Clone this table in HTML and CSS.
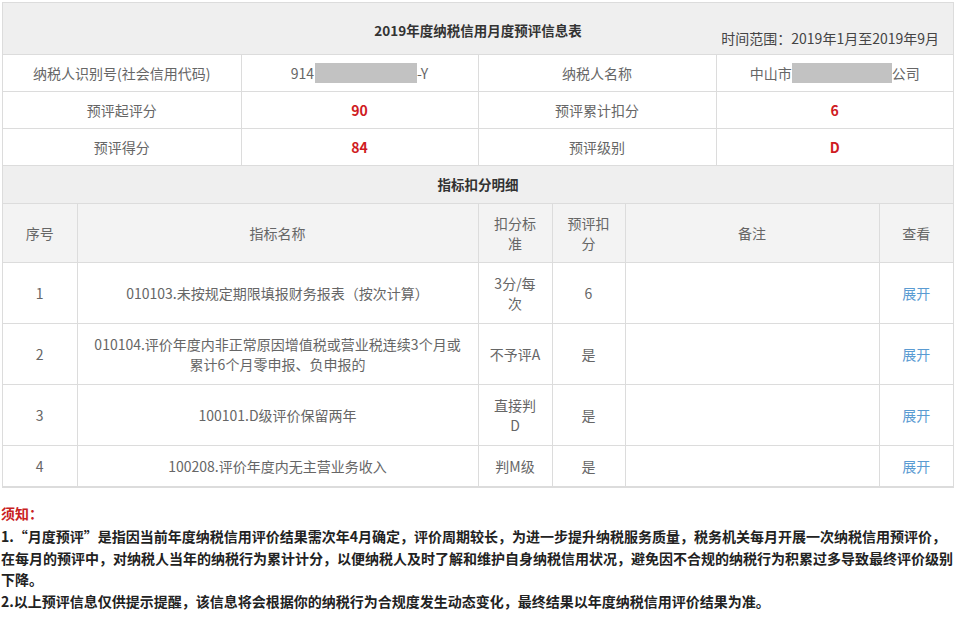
FILE: index.html
```html
<!DOCTYPE html>
<html lang="zh-CN">
<head>
<meta charset="utf-8">
<title>2019年度纳税信用月度预评信息表</title>
<link rel="stylesheet" href="styles.css">
</head>
<body>
<div class="page">
  <div class="sheet">
    <div class="title-row">
      <div></div>
      <div class="title">2019年度纳税信用月度预评信息表</div>
      <div class="range">时间范围：2019年1月至2019年9月</div>
    </div>
    <table class="info">
      <colgroup><col class="c1"><col class="c2"><col class="c3"><col class="c4"></colgroup>
      <tr>
        <td>纳税人识别号(社会信用代码)</td>
        <td>914<span class="mask m1"></span>-Y</td>
        <td>纳税人名称</td>
        <td>中山市<span class="mask m2"></span>公司</td>
      </tr>
      <tr>
        <td>预评起评分</td>
        <td class="num">90</td>
        <td>预评累计扣分</td>
        <td class="num">6</td>
      </tr>
      <tr>
        <td>预评得分</td>
        <td class="num">84</td>
        <td>预评级别</td>
        <td class="num">D</td>
      </tr>
    </table>
    <div class="subtitle">指标扣分明细</div>
    <table class="detail">
      <colgroup><col class="d1"><col class="d2"><col class="d3"><col class="d4"><col class="d5"><col class="d6"></colgroup>
      <tr class="head">
        <td>序号</td>
        <td>指标名称</td>
        <td>扣分标<br>准</td>
        <td>预评扣<br>分</td>
        <td>备注</td>
        <td>查看</td>
      </tr>
      <tr>
        <td>1</td>
        <td>010103.未按规定期限填报财务报表（按次计算）</td>
        <td>3分/每<br>次</td>
        <td>6</td>
        <td></td>
        <td><a class="link">展开</a></td>
      </tr>
      <tr>
        <td>2</td>
        <td>010104.评价年度内非正常原因增值税或营业税连续3个月或<br>累计6个月零申报、负申报的</td>
        <td>不予评A</td>
        <td>是</td>
        <td></td>
        <td><a class="link">展开</a></td>
      </tr>
      <tr>
        <td>3</td>
        <td>100101.D级评价保留两年</td>
        <td>直接判<br>D</td>
        <td>是</td>
        <td></td>
        <td><a class="link">展开</a></td>
      </tr>
      <tr>
        <td>4</td>
        <td>100208.评价年度内无主营业务收入</td>
        <td>判M级</td>
        <td>是</td>
        <td></td>
        <td><a class="link">展开</a></td>
      </tr>
    </table>
  </div>
  <div class="notes">
    <div class="notice">须知：</div>
    <p>1.“月度预评”是指因当前年度纳税信用评价结果需次年4月确定，评价周期较长，为进一步提升纳税服务质量，税务机关每月开展一次纳税信用预评价，<br>在每月的预评中，对纳税人当年的纳税行为累计计分，以便纳税人及时了解和维护自身纳税信用状况，避免因不合规的纳税行为积累过多导致最终评价级别<br>下降。</p>
    <p>2.以上预评信息仅供提示提醒，该信息将会根据你的纳税行为合规度发生动态变化，最终结果以年度纳税信用评价结果为准。</p>
  </div>
</div>
</body>
</html>
```
FILE: styles.css
```css
html, body {
  margin: 0;
  padding: 0;
  background: #fff;
}
body {
  font-family: "Noto Sans CJK SC", "Microsoft YaHei", sans-serif;
  font-size: 14px;
  color: #666;
}
.page {
  padding: 2px 0 0 2px;
  width: 952px;
}
.sheet {
  width: 950px;
  border: 1px solid #dcdcdc;
}
.title-row {
  display: grid;
  grid-template-columns: 1fr auto 1fr;
  height: 51px;
  background: #efefef;
  border-bottom: 1px solid #dcdcdc;
}
.title {
  align-self: center;
  font-size: 13.5px;
  font-weight: bold;
  color: #333;
  padding-top: 2px;
}
.range {
  justify-self: end;
  align-self: end;
  padding: 0 14px 6px 0;
  color: #444;
  line-height: 20px;
}
table {
  border-collapse: collapse;
  width: 950px;
  table-layout: fixed;
}
td {
  border: 1px solid #dcdcdc;
  text-align: center;
  line-height: 20px;
}
tr > td:first-child { border-left: none; }
tr > td:last-child { border-right: none; }
.info tr:first-child td { border-top: none; }
.info td {
  padding: 8px 4px;
  color: #666;
}
.c1 { width: 238px; }
.c2 { width: 237px; }
.c3 { width: 238px; }
.c4 { width: 237px; }
.info .num {
  color: #cf1b22;
  font-weight: bold;
}
.mask {
  display: inline-block;
  height: 20px;
  background: #c2c2c2;
  vertical-align: top;
}
.m1 { width: 102px; margin-left: 1px; }
.m2 { width: 100px; }
.subtitle {
  height: 37px;
  line-height: 37px;
  text-align: center;
  font-size: 13.5px;
  font-weight: bold;
  color: #333;
  background: #efefef;
}
.detail td {
  padding: 10px 0;
  height: 20px;
}
.detail .head td {
  background: #f3f3f3;
  height: auto;
  padding: 9px 0 9px;
}
.d1 { width: 74px; }
.d2 { width: 401px; }
.d3 { width: 74px; }
.d4 { width: 73px; }
.d5 { width: 254px; }
.d6 { width: 74px; }
.link {
  color: #5a9bd2;
  cursor: pointer;
}
.notes {
  margin-top: 14px;
  width: 952px;
  margin-left: -1px;
}
.notice {
  color: #c9211e;
  font-weight: bold;
  line-height: 22px;
  margin-bottom: 2px;
}
.notes p {
  margin: 0;
  color: #222;
  font-weight: bold;
  line-height: 21.5px;
  white-space: nowrap;
}
```
